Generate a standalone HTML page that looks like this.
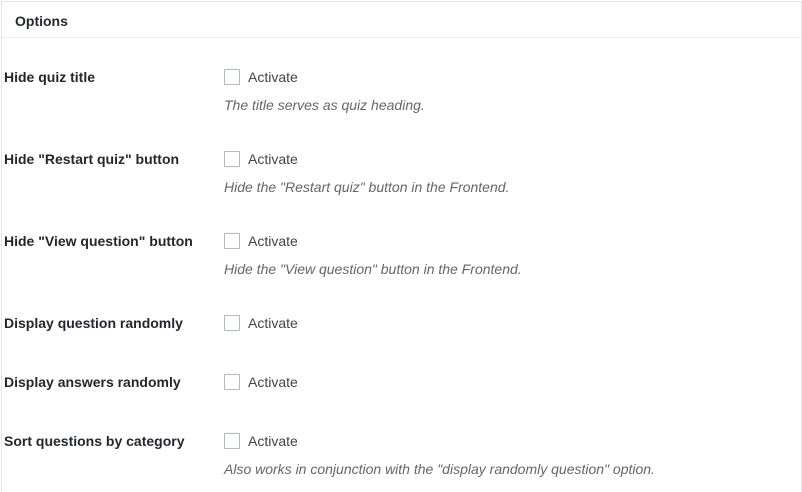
<!DOCTYPE html>
<html><head><style>
body{margin:0;width:802px;height:483px;background:#fff;font-family:"Liberation Sans",sans-serif;color:#23282d;overflow:hidden;position:relative}
.box{position:absolute;left:1px;top:1px;width:799px;height:490px;border:1px solid #e5e5e5;border-bottom:none}
.hd{position:absolute;left:0;top:0;width:799px;height:35px;border-bottom:1px solid #eee;}
.hd span{position:absolute;left:13px;top:11px;font-size:14px;font-weight:600}
.l{position:absolute;left:4px;font-size:14px;font-weight:bold;color:#23282d}
.cb{position:absolute;left:224px;width:14px;height:14px;border:1px solid #b4b9be;background:#fff;border-radius:1px}
.a{position:absolute;left:248px;font-size:14px;color:#444}
.d{position:absolute;left:224px;font-size:14px;font-style:italic;color:#666}
</style></head><body>
<div class="box"><div class="hd"><span>Options</span></div></div>
<div class="l" style="top:69px">Hide quiz title</div><div class="cb" style="top:69px"></div><div class="a" style="top:69px">Activate</div><div class="d" style="top:97px">The title serves as quiz heading.</div>
<div class="l" style="top:151px">Hide "Restart quiz" button</div><div class="cb" style="top:151px"></div><div class="a" style="top:151px">Activate</div><div class="d" style="top:179px">Hide the "Restart quiz" button in the Frontend.</div>
<div class="l" style="top:233px">Hide "View question" button</div><div class="cb" style="top:233px"></div><div class="a" style="top:233px">Activate</div><div class="d" style="top:261px">Hide the "View question" button in the Frontend.</div>
<div class="l" style="top:315px">Display question randomly</div><div class="cb" style="top:315px"></div><div class="a" style="top:315px">Activate</div>
<div class="l" style="top:374px">Display answers randomly</div><div class="cb" style="top:374px"></div><div class="a" style="top:374px">Activate</div>
<div class="l" style="top:433px">Sort questions by category</div><div class="cb" style="top:433px"></div><div class="a" style="top:433px">Activate</div><div class="d" style="top:461px">Also works in conjunction with the "display randomly question" option.</div>
</body></html>
